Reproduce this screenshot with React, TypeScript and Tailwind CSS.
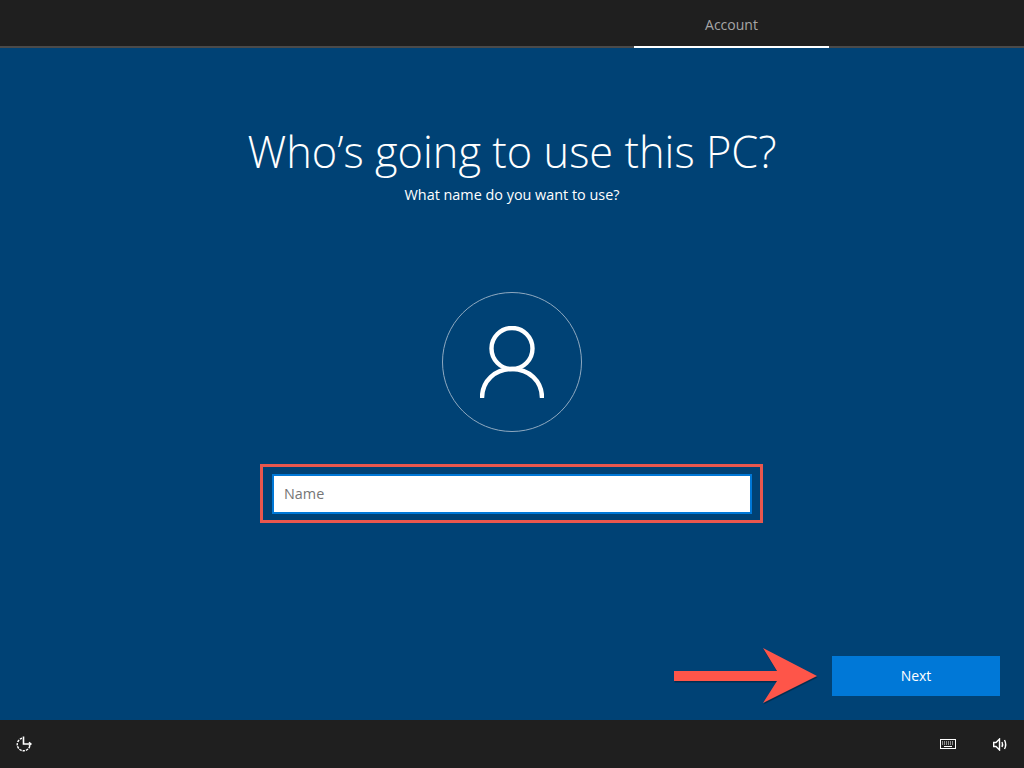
import type { ReactNode } from 'react';

const fontStack = "font-['Open_Sans','Noto_Sans',sans-serif]";

function TopBar() {
  return (
    <header className="flex h-12 shrink-0 justify-end border-b-2 border-[#4a4a4a] bg-[#1f1f1f] pr-[195px]">
      <div className="-mb-0.5 flex h-12 w-[195px] items-center justify-center border-b-2 border-white pt-1 text-sm text-[#a6a6a6]">
        Account
      </div>
    </header>
  );
}

function UserIcon() {
  return (
    <svg width="64" height="72" viewBox="0 0 64 72" fill="none" stroke="white" strokeWidth="4.4">
      <circle cx="32" cy="22.5" r="20.5" />
      <path d="M2 72 C2 55 15 43 32 43 C49 43 62 55 62 72" />
    </svg>
  );
}

function IconButton({ children }: { children: ReactNode }) {
  return <span className="flex h-5 w-5 items-center justify-center">{children}</span>;
}

function BottomBar() {
  return (
    <footer className="flex h-12 shrink-0 items-center justify-between bg-[#1f1f1f] pl-[14px] pr-[14px]">
      <IconButton>
        <svg width="18" height="18" viewBox="0 0 18 18" fill="none" stroke="white" strokeWidth="1.4">
          <path d="M7 3.2 A6.4 6.4 0 1 0 15 10" strokeDasharray="2.4 1" />
          <path d="M8.5 1.5 V9 H15.5" strokeWidth="1.6" />
          <path d="M14 7.2 L16 9 L14 10.8" />
        </svg>
      </IconButton>
      <div className="flex items-center gap-[32px]">
        <IconButton>
          <svg width="16" height="10" viewBox="0 0 16 10" fill="none" stroke="white">
            <rect x="0.5" y="0.5" width="15" height="9" />
            <path d="M2 3 H14 M2 5 H14" strokeDasharray="1 1" />
            <path d="M4 7.5 H12" />
          </svg>
        </IconButton>
        <IconButton>
          <svg width="15" height="13" viewBox="0 0 15 13" fill="none" stroke="white" strokeWidth="1.4">
            <path d="M0.7 4.5 H3 L6.5 1 V12 L3 8.5 H0.7 Z" />
            <path d="M9 4 Q10.2 6.5 9 9" />
            <path d="M11.5 2 Q13.9 6.5 11.5 11" />
          </svg>
        </IconButton>
      </div>
    </footer>
  );
}

export default function App() {
  return (
    <div className={`flex h-[768px] w-[1024px] flex-col overflow-hidden bg-[#004275] text-white ${fontStack}`}>
      <TopBar />
      <main className="relative flex flex-1 flex-col items-center">
        <h1 className="mt-[74px] text-[43.4px] leading-[60px] font-light">Who’s going to use this PC?</h1>
        <p className="mt-[3px] text-[14.4px] leading-5">What name do you want to use?</p>
        <div className="mt-[87px] flex h-[140px] w-[140px] items-center justify-center rounded-full border border-[#8fa9c0]">
          <UserIcon />
        </div>

        <div className="relative mt-[42px] h-10 w-[480px] border-2 border-[#0078d7] bg-white px-2.5 text-[14.4px] leading-9 text-[#767676]">
          Name
          {/* annotation box drawn over the screenshot */}
          <div className="absolute -top-[12px] -left-[14px] h-[59px] w-[503px] border-[3px] border-[#e8574e]" />
        </div>

        <button className="absolute right-6 bottom-6 h-10 w-[168px] bg-[#0078d7] text-sm text-white">Next</button>

        {/* annotation arrow */}
        <svg className="absolute top-[599px] left-[672px]" width="152" height="60" viewBox="0 0 152 60">
          <path d="M2 24 H105 L91 1 L145 29 L91 56 L105 34 H2 Z" fill="#000" fillOpacity="0.3" transform="translate(0.5 1.5)" />
          <path d="M2 24 H105 L91 1 L145 29 L91 56 L105 34 H2 Z" fill="#fe5549" />
        </svg>
      </main>
      <BottomBar />
    </div>
  );
}
